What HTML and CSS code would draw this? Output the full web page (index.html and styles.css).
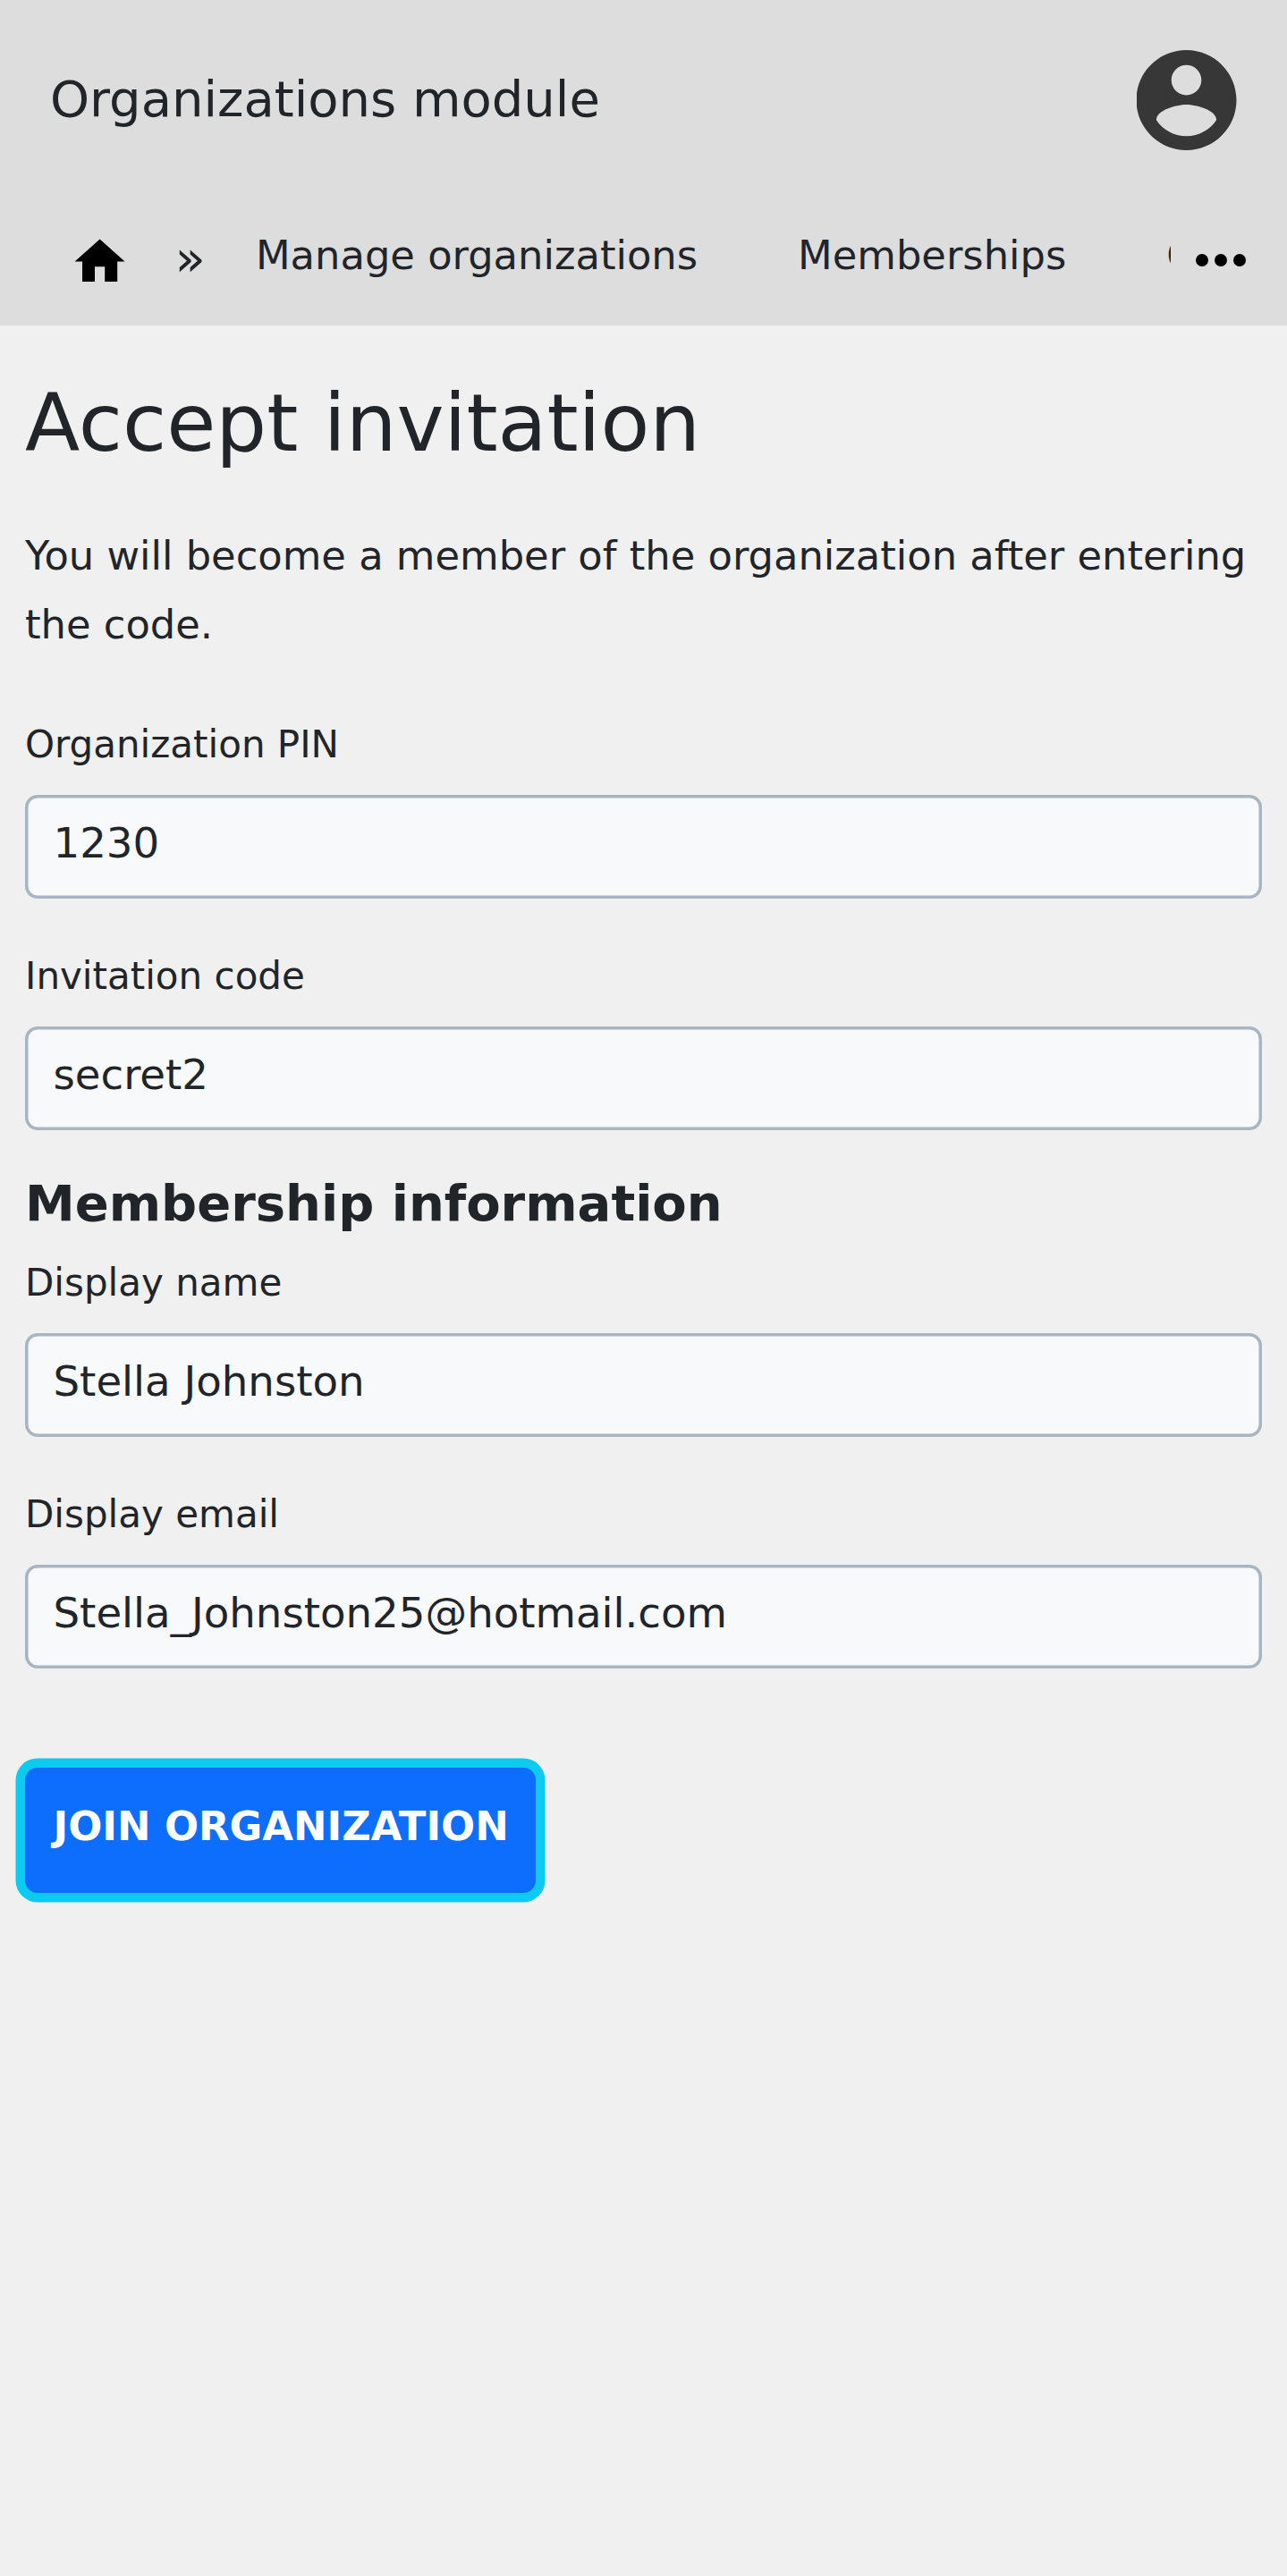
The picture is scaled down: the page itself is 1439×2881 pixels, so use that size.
FILE: index.html
```html
<!DOCTYPE html>
<html lang="en">
<head>
<meta charset="utf-8">
<title>Accept invitation</title>
<link rel="stylesheet" href="styles.css">
</head>
<body>
<header class="header">
  <div class="topbar">
    <span class="brand">Organizations module</span>
    <svg class="avatar" viewBox="2.09 2 20 20" role="img" aria-label="Account"><path d="M12 2C6.48 2 2 6.48 2 12s4.48 10 10 10 10-4.48 10-10S17.52 2 12 2zm0 3c1.66 0 3 1.34 3 3s-1.34 3-3 3-3-1.34-3-3 1.34-3 3-3zm0 14.2c-2.5 0-4.71-1.28-6-3.22.03-1.99 4-3.08 6-3.08 1.99 0 5.97 1.09 6 3.08-1.29 1.94-3.5 3.22-6 3.22z"/></svg>
  </div>
  <nav class="nav">
    <div class="nav-items">
      <svg class="home" viewBox="0 0 24 24" role="img" aria-label="Home"><path d="M10 20v-6h4v6h5v-8h3L12 3 2 12h3v8z"/></svg>
      <span class="separator">»</span>
      <a class="nav-link">Manage organizations</a>
      <a class="nav-link">Memberships</a>
      <a class="nav-link">O</a>
    </div>
    <svg class="more" viewBox="0 0 24 24" role="img" aria-label="More"><circle cx="6" cy="12" r="2"/><circle cx="12" cy="12" r="2"/><circle cx="18" cy="12" r="2"/></svg>
  </nav>
</header>
<main class="main">
  <h1 class="title">Accept invitation</h1>
  <p class="intro">You will become a member of the organization after entering the code.</p>
  <form class="form">
    <div class="field">
      <label class="label" for="pin">Organization PIN</label>
      <input class="input" id="pin" type="text" value="1230">
    </div>
    <div class="field">
      <label class="label" for="code">Invitation code</label>
      <input class="input" id="code" type="text" value="secret2">
    </div>
    <h2 class="subtitle">Membership information</h2>
    <div class="field">
      <label class="label" for="name">Display name</label>
      <input class="input" id="name" type="text" value="Stella Johnston">
    </div>
    <div class="field">
      <label class="label" for="email">Display email</label>
      <input class="input" id="email" type="text" value="Stella_Johnston25@hotmail.com">
    </div>
    <button class="submit" type="button">JOIN ORGANIZATION</button>
  </form>
</main>
</body>
</html>
```
FILE: styles.css
```css
* { box-sizing: border-box; }

body {
  margin: 0;
  min-height: 2881px;
  background: #f0f0f0;
  color: #212529;
  font-family: "DejaVu Sans", sans-serif;
  font-size: 44.8px;
}

.header {
  height: 364px;
  background: #ddd;
}

.topbar {
  display: flex;
  justify-content: space-between;
  align-items: flex-start;
  height: 224px;
  padding: 56px 56px 0;
}

.brand {
  padding-top: 22px;
  font-size: 56px;
  line-height: 65px;
}

.avatar {
  width: 112px;
  height: 112px;
  fill: #373737;
}

.nav {
  display: flex;
  align-items: flex-start;
}

.nav-items {
  display: flex;
  align-items: flex-start;
  width: 1309px;
  height: 140px;
  padding-left: 78.4px;
  overflow: hidden;
  white-space: nowrap;
}

.home {
  flex: none;
  width: 67.2px;
  height: 67.2px;
  margin-top: 34.5px;
}

.separator {
  flex: none;
  width: 84.4px;
  margin-top: 32px;
  margin-left: 50px;
  font-size: 56px;
  line-height: 65px;
}

.nav-link {
  flex: none;
  margin-top: 35px;
  margin-right: 112px;
  padding-left: 6px;
  line-height: 53px;
}

.nav-link + .nav-link { padding-left: 0; }

.more {
  flex: none;
  width: 84px;
  height: 84px;
  margin: 24.5px 0 0 14px;
}

.main { padding: 57px 28px 0; }

.title {
  margin: 0;
  font-size: 89.6px;
  font-weight: 400;
  line-height: 104px;
}

.intro {
  margin: 58px 0 71px;
  line-height: 77px;
}

.field { margin-bottom: 62.5px; }

.label {
  display: block;
  margin-bottom: 32px;
  font-size: 42px;
  line-height: 49px;
}

.input {
  display: block;
  width: 1382.5px;
  height: 115.5px;
  padding: 27px 31.5px 34.5px;
  border: 0;
  border-radius: 14px;
  background: #f8f9fb;
  box-shadow: inset 0 0 0 3.5px #a9b5c2;
  color: #212529;
  font-family: inherit;
  font-size: 46.667px;
  line-height: 54px;
}

.subtitle {
  margin: -13px 0 32px;
  font-size: 56px;
  font-weight: 700;
  line-height: 65px;
}

.submit {
  display: block;
  width: 570.5px;
  height: 140px;
  margin-top: 111.5px;
  padding: 39px 0 48px 31.5px;
  border: 0;
  border-radius: 14px;
  background: #0d6efd;
  box-shadow: 0 0 0 10.5px #0dcaf0;
  color: #fff;
  font-family: inherit;
  font-size: 44.8px;
  font-weight: 700;
  line-height: 53px;
  text-align: left;
  white-space: nowrap;
}
```
